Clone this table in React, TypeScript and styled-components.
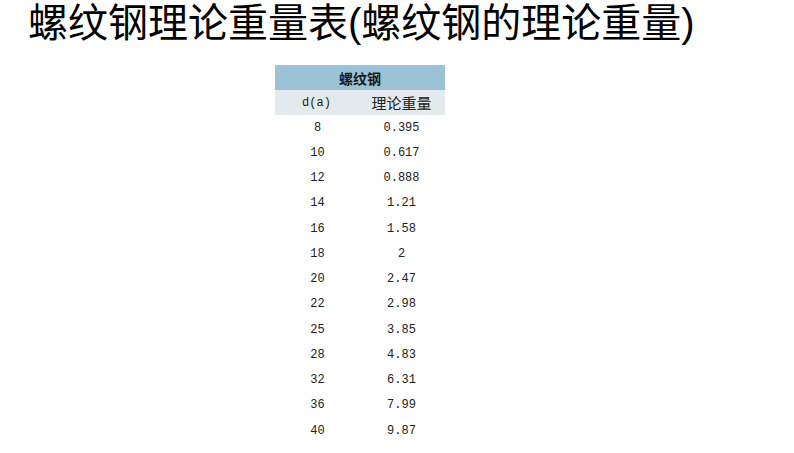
import React from "react";
import styled, { createGlobalStyle } from "styled-components";

const rows: [string, string][] = [
  ["8", "0.395"],
  ["10", "0.617"],
  ["12", "0.888"],
  ["14", "1.21"],
  ["16", "1.58"],
  ["18", "2"],
  ["20", "2.47"],
  ["22", "2.98"],
  ["25", "3.85"],
  ["28", "4.83"],
  ["32", "6.31"],
  ["36", "7.99"],
  ["40", "9.87"],
];

const GlobalStyle = createGlobalStyle`
  html, body {
    margin: 0;
    padding: 0;
    background: #fff;
  }
  body {
    font-family: "Liberation Sans", "Noto Sans CJK SC", sans-serif;
    color: #000;
  }
`;

const Page = styled.div`
  width: 794px;
  min-height: 453px;
  display: flex;
  flex-direction: column;
`;

const Title = styled.h1`
  margin: 0;
  padding: 0 0 0 28px;
  font-family: "Liberation Sans", "Noto Sans CJK SC", sans-serif;
  font-size: 40px;
  line-height: 46px;
  font-weight: 400;
  color: #000;
  white-space: nowrap;
`;

const Table = styled.table`
  margin: 19px 0 0 275px;
  width: 170px;
  border-collapse: collapse;
  table-layout: fixed;
`;

const Caption = styled.th`
  height: 25px;
  padding: 0;
  background: #9cc2d8;
  font-family: "Noto Sans CJK SC", sans-serif;
  font-size: 14px;
  font-weight: 700;
  color: #1a1a1a;
  text-align: center;
`;

const HeadCell = styled.th<{ $cjk?: boolean }>`
  height: 25px;
  padding: 0;
  background: #e2eaee;
  font-family: ${(p) =>
    p.$cjk ? `"Noto Sans CJK SC", sans-serif` : `"Liberation Mono", monospace`};
  font-size: ${(p) => (p.$cjk ? "15px" : "12px")};
  font-weight: 400;
  color: #222;
  text-align: center;
`;

const Cell = styled.td<{ $shift?: number }>`
  height: 25.25px;
  padding: 0 0 0 ${(p) => p.$shift ?? 0}px;
  font-family: "Liberation Mono", monospace;
  font-size: 12px;
  color: #222;
  text-align: center;
`;

export default function App() {
  return (
    <Page>
      <GlobalStyle />
      <Title>螺纹钢理论重量表(螺纹钢的理论重量)</Title>
      <Table>
        <colgroup>
          <col style={{ width: 83 }} />
          <col style={{ width: 87 }} />
        </colgroup>
        <thead>
          <tr>
            <Caption colSpan={2}>螺纹钢</Caption>
          </tr>
          <tr>
            <HeadCell>d(a)</HeadCell>
            <HeadCell $cjk>理论重量</HeadCell>
          </tr>
        </thead>
        <tbody>
          {rows.map(([d, w]) => (
            <tr key={d}>
              <Cell $shift={2}>{d}</Cell>
              <Cell>{w}</Cell>
            </tr>
          ))}
        </tbody>
      </Table>
    </Page>
  );
}
